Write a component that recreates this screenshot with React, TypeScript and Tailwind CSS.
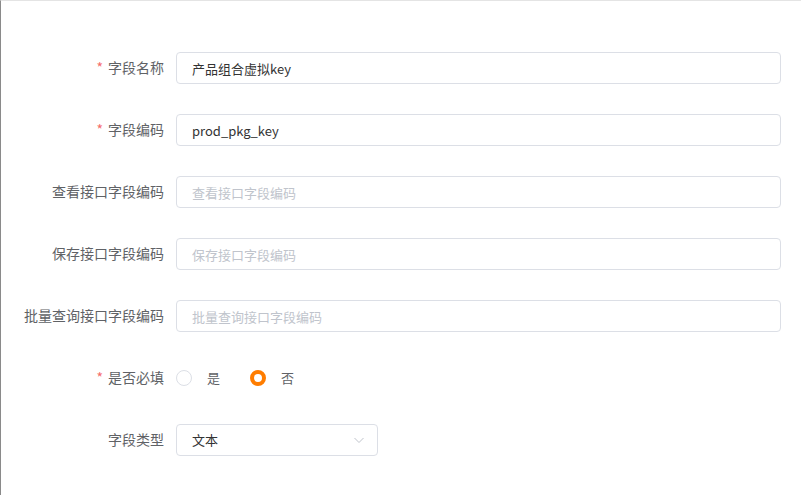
import { useState } from 'react';

type Field = {
  label: string;
  required?: boolean;
  value?: string;
  placeholder?: string;
};

const fields: Field[] = [
  { label: '字段名称', required: true, value: '产品组合虚拟key' },
  { label: '字段编码', required: true, value: 'prod_pkg_key' },
  { label: '查看接口字段编码', placeholder: '查看接口字段编码' },
  { label: '保存接口字段编码', placeholder: '保存接口字段编码' },
  { label: '批量查询接口字段编码', placeholder: '批量查询接口字段编码' },
];

function Label({ text, required }: { text: string; required?: boolean }) {
  return (
    <label className="flex w-[163px] shrink-0 items-center justify-end pb-px text-[14px] text-[#606266]">
      {required && <span className="mr-[5px] text-[#f56c6c]">*</span>}
      {text}
    </label>
  );
}

function Radio({ checked, label, onClick }: { checked: boolean; label: string; onClick: () => void }) {
  return (
    <button type="button" onClick={onClick} className="flex items-center gap-[15px] text-[13px] text-[#606266]">
      <span
        className={`h-4 w-4 rounded-full border bg-white ${
          checked ? 'border-[4px] border-[#ff7d00]' : 'border-[#dcdfe6]'
        }`}
      />
      <span>{label}</span>
    </button>
  );
}

export default function App() {
  const [required, setRequired] = useState(false);

  return (
    <div
      className="flex h-[495px] w-[801px] flex-col gap-[30px] border-l border-t border-l-[#8a8a8a] border-t-[#e4e4e4] bg-white pr-[20px] pt-[51px]"
      style={{ fontFamily: '"Noto Sans CJK SC", "Noto Sans", sans-serif' }}
    >
      {fields.map((f) => (
        <div key={f.label} className="flex h-8 items-center gap-3">
          <Label text={f.label} required={f.required} />
          <input
            readOnly
            defaultValue={f.value}
            placeholder={f.placeholder}
            className="h-8 flex-1 rounded border border-[#dcdfe6] px-[15px] text-[13px] text-[#333] outline-none placeholder:text-[#c0c4cc]"
          />
        </div>
      ))}

      <div className="flex h-8 items-center gap-3">
        <Label text="是否必填" required />
        <div className="flex items-center gap-[30px]">
          <Radio checked={required} label="是" onClick={() => setRequired(true)} />
          <Radio checked={!required} label="否" onClick={() => setRequired(false)} />
        </div>
      </div>

      <div className="flex h-8 items-center gap-3">
        <Label text="字段类型" />
        <div className="flex h-8 w-[202px] items-center justify-between rounded border border-[#dcdfe6] pl-[15px] pr-[12px] text-[13px] text-[#333]">
          <span>文本</span>
          <svg width="12" height="12" viewBox="0 0 12 12" fill="none" stroke="#c0c4cc" strokeWidth="1">
            <path d="M1.5 4l4.5 4.5 4.5-4.5" />
          </svg>
        </div>
      </div>
    </div>
  );
}
